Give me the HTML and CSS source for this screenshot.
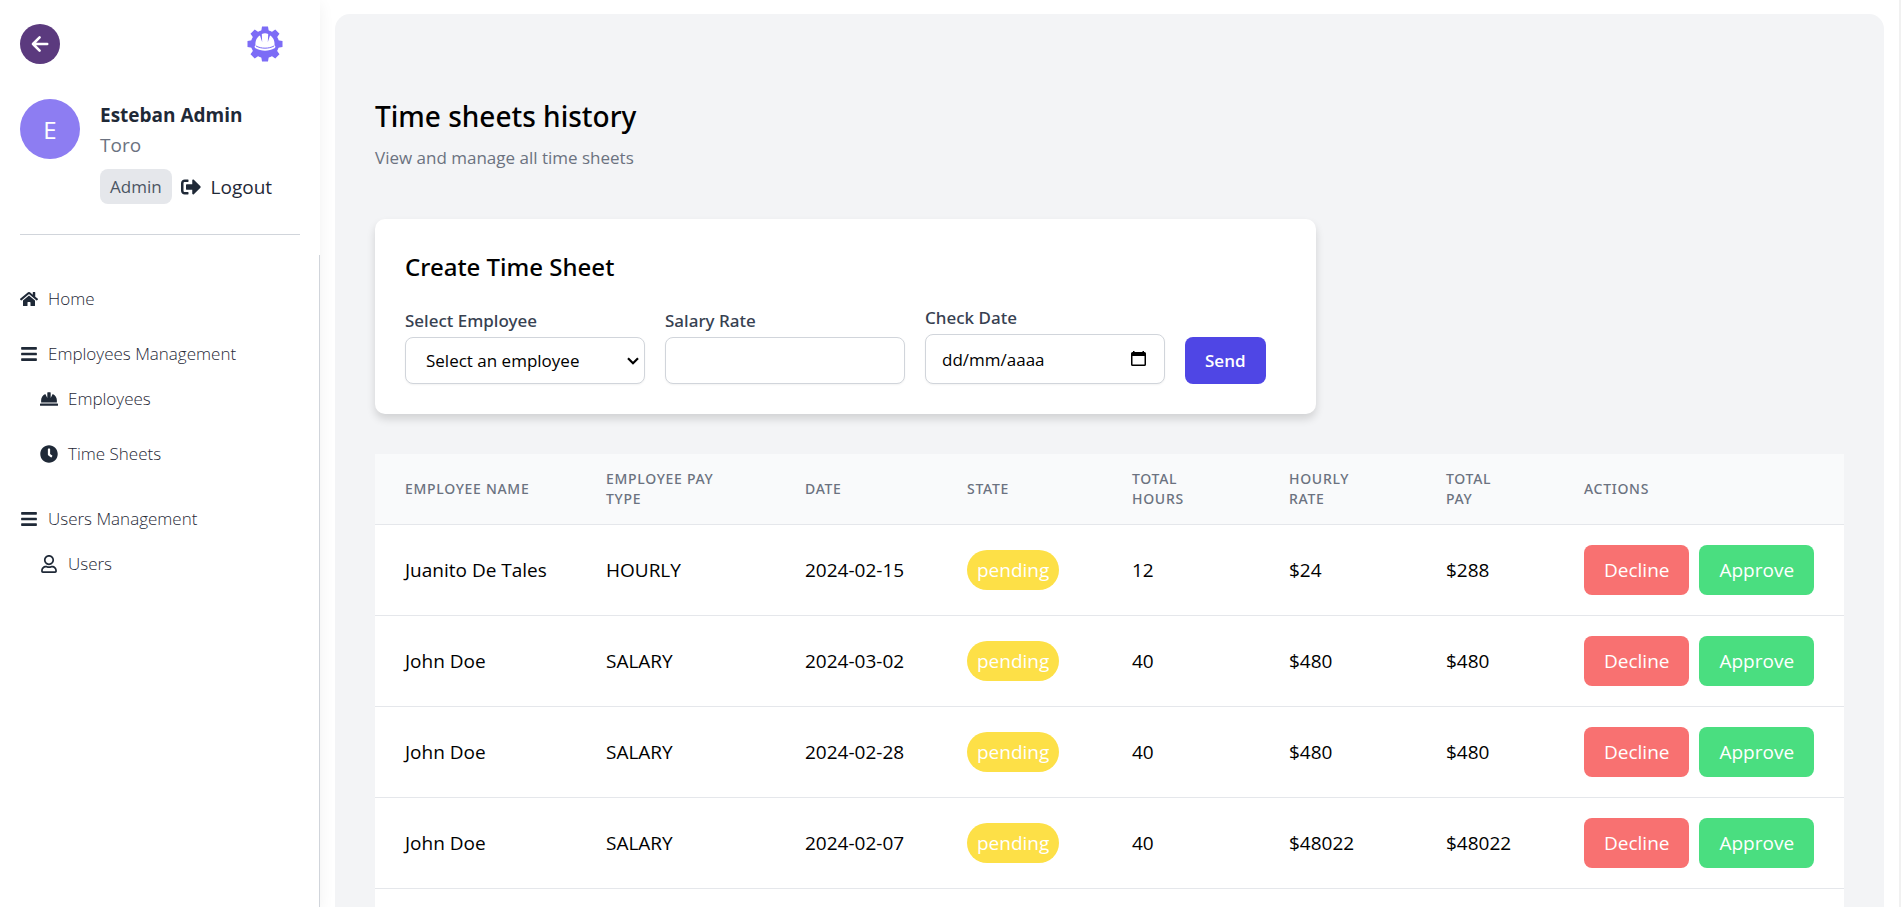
FILE: index.html
```html
<!DOCTYPE html>
<html lang="en">
<head>
<meta charset="utf-8">
<title>Time sheets history</title>
<link rel="stylesheet" href="styles.css">
</head>
<body>
<div class="app">
  <aside class="sidebar">
    <header class="sidebar-top">
      <button class="back" type="button" aria-label="Collapse sidebar">
        <svg viewBox="0 0 20 20" width="20" height="20" fill="none" stroke="currentColor" stroke-width="2.6" stroke-linecap="round" stroke-linejoin="round"><path d="M17.2 10H3M9.6 3.4 3 10l6.6 6.6"/></svg>
      </button>
      <svg class="logo" viewBox="0 0 36 36" width="36" height="36" aria-hidden="true">
        <g fill="#7c6cf6">
          <circle cx="18" cy="18" r="14"/>
          <path d="M15 0.500h6l1 6h-8zM15 35.500h6l1-6h-8zM0.500 15v6l6 1v-8zM35.500 15v6l-6 1v-8z"/>
          <path transform="rotate(45 18 18)" d="M15 0.500h6l1 6h-8zM15 35.500h6l1-6h-8zM0.500 15v6l6 1v-8zM35.500 15v6l-6 1v-8z"/>
        </g>
        <path fill="#fff" d="M8.500 19.500C8 14.500 10.200 11 13 9.600l2.200 6.600-.4-8.200c2-1 4.400-1 6.400 0l-.4 8.200L23 9.600c2.800 1.400 5 4.900 4.500 9.900 1.200.6 1.200 2 0 2.800-5.500 3.200-13.500 3.200-19 0-1.200-.8-1.200-2.200 0-2.800z"/>
        <path fill="none" stroke="#7c6cf6" stroke-width="1" d="M9 20c5 2.900 13 2.900 18 0"/>
      </svg>
    </header>
    <section class="profile">
      <div class="avatar">E</div>
      <div class="profile-info">
        <strong class="name">Esteban Admin</strong>
        <span class="company">Toro</span>
        <div class="profile-actions">
          <span class="role">Admin</span>
          <button class="logout" type="button">
            <svg viewBox="0 0 512 512" width="20" height="20" fill="currentColor"><path d="M497 273L329 441c-15 15-41 4.500-41-17v-96H152c-13.300 0-24-10.700-24-24v-96c0-13.300 10.700-24 24-24h136V88c0-21.400 25.900-32 41-17l168 168c9.300 9.400 9.300 24.600 0 34zM192 436v-40c0-6.600-5.400-12-12-12H96c-17.700 0-32-14.300-32-32V160c0-17.700 14.300-32 32-32h84c6.600 0 12-5.400 12-12V76c0-6.600-5.400-12-12-12H96c-53 0-96 43-96 96v192c0 53 43 96 96 96h84c6.600 0 12-5.400 12-12z"/></svg>
            Logout
          </button>
        </div>
      </div>
    </section>
    <hr class="rule">
    <nav class="nav">
      <a class="nav-link" href="#home"><svg viewBox="0 0 576 512" width="18" height="18" fill="currentColor"><path d="M280.370 148.260L96 300.110V464a16 16 0 0 0 16 16l112.060-.29a16 16 0 0 0 15.920-16V368a16 16 0 0 1 16-16h64a16 16 0 0 1 16 16v95.640a16 16 0 0 0 16 16.050L464 480a16 16 0 0 0 16-16V300L295.670 148.260a12.190 12.190 0 0 0-15.300 0zM571.600 251.470L488 182.560V44.050a12 12 0 0 0-12-12h-56a12 12 0 0 0-12 12v72.610L318.470 43a48 48 0 0 0-61 0L4.340 251.470a12 12 0 0 0-1.600 16.900l25.500 31A12 12 0 0 0 45.150 301l235.220-193.740a12.190 12.190 0 0 1 15.300 0L530.900 301a12 12 0 0 0 16.900-1.600l25.500-31a12 12 0 0 0-1.700-16.930z"/></svg>Home</a>
      <div class="nav-group">
        <div class="nav-link"><svg viewBox="0 0 448 512" width="18" height="18" fill="currentColor"><path d="M16 132h416c8.800 0 16-7.200 16-16V76c0-8.800-7.200-16-16-16H16C7.200 60 0 67.200 0 76v40c0 8.800 7.200 16 16 16zm0 160h416c8.800 0 16-7.200 16-16v-40c0-8.800-7.200-16-16-16H16c-8.800 0-16 7.200-16 16v40c0 8.800 7.200 16 16 16zm0 160h416c8.800 0 16-7.200 16-16v-40c0-8.800-7.200-16-16-16H16c-8.800 0-16 7.200-16 16v40c0 8.800 7.200 16 16 16z"/></svg>Employees Management</div>
        <div class="nav-sub">
          <a class="nav-link" href="#employees"><svg viewBox="0 0 512 512" width="18" height="18" fill="currentColor"><path d="M480 288c0-80.250-49.280-148.920-119.190-177.620L304 224V80a16 16 0 0 0-16-16h-64a16 16 0 0 0-16 16v144l-56.810-113.620C81.280 139.080 32 207.750 32 288v64h448zm16 96H16a16 16 0 0 0-16 16v32a16 16 0 0 0 16 16h480a16 16 0 0 0 16-16v-32a16 16 0 0 0-16-16z"/></svg>Employees</a>
          <a class="nav-link" href="#timesheets"><svg viewBox="0 0 512 512" width="18" height="18" fill="currentColor"><path d="M256,8C119,8,8,119,8,256S119,504,256,504,504,393,504,256,393,8,256,8Zm92.490,313h0l-20,25a16,16,0,0,1-22.490,2.500h0l-67-49.720a40,40,0,0,1-15-31.230V112a16,16,0,0,1,16-16h32a16,16,0,0,1,16,16V256l58,42.500A16,16,0,0,1,348.490,321Z"/></svg>Time Sheets</a>
        </div>
      </div>
      <div class="nav-group">
        <div class="nav-link"><svg viewBox="0 0 448 512" width="18" height="18" fill="currentColor"><path d="M16 132h416c8.800 0 16-7.200 16-16V76c0-8.800-7.200-16-16-16H16C7.200 60 0 67.200 0 76v40c0 8.800 7.200 16 16 16zm0 160h416c8.800 0 16-7.200 16-16v-40c0-8.800-7.200-16-16-16H16c-8.800 0-16 7.200-16 16v40c0 8.800 7.200 16 16 16zm0 160h416c8.800 0 16-7.200 16-16v-40c0-8.800-7.200-16-16-16H16c-8.800 0-16 7.200-16 16v40c0 8.800 7.200 16 16 16z"/></svg>Users Management</div>
        <div class="nav-sub">
          <a class="nav-link" href="#users"><svg viewBox="0 0 448 512" width="18" height="18" fill="currentColor"><path d="M313.600 304c-28.700 0-42.500 16-89.600 16-47.100 0-60.800-16-89.600-16C60.200 304 0 364.200 0 438.400V464c0 26.500 21.500 48 48 48h352c26.500 0 48-21.500 48-48v-25.600c0-74.200-60.200-134.400-134.400-134.400zM400 464H48v-25.600c0-47.600 38.800-86.400 86.400-86.400 14.600 0 38.300 16 89.600 16 51.700 0 74.900-16 89.600-16 47.600 0 86.400 38.800 86.400 86.400V464zM224 288c79.500 0 144-64.500 144-144S303.500 0 224 0 80 64.500 80 144s64.500 144 144 144zm0-240c52.900 0 96 43.100 96 96s-43.100 96-96 96-96-43.100-96-96 43.100-96 96-96z"/></svg>Users</a>
        </div>
      </div>
    </nav>
  </aside>
  <div class="content">
    <main class="panel">
      <h1 class="title">Time sheets history</h1>
      <p class="subtitle">View and manage all time sheets</p>
      <section class="card">
        <h2 class="card-title">Create Time Sheet</h2>
        <form class="form">
          <div class="field">
            <label for="employee">Select Employee</label>
            <div class="select-wrap">
              <select class="control" id="employee"><option>Select an employee</option></select>
              <svg class="chevron" viewBox="0 0 12 8" width="12" height="8" fill="none" stroke="#000" stroke-width="2.200"><path d="M1 1.200l5 5 5-5"/></svg>
            </div>
          </div>
          <div class="field">
            <label for="rate">Salary Rate</label>
            <input class="control" id="rate" type="text">
          </div>
          <div class="field">
            <label for="date">Check Date</label>
            <div class="select-wrap">
              <input class="control control-date" id="date" type="text" placeholder="dd/mm/aaaa">
              <button class="calendar" type="button" aria-label="Pick a date"><svg viewBox="0 0 15 17" width="15" height="17"><path fill="#000" fill-rule="evenodd" d="M2 1h1.500v1h8V1H13v1h.500A1.500 1.500 0 0 1 15 3.500v11a1.500 1.500 0 0 1-1.500 1.500h-12A1.500 1.500 0 0 1 0 14.500v-11A1.500 1.500 0 0 1 1.500 2H2zM1.500 6v8.500h12V6z"/></svg></button>
            </div>
          </div>
          <button class="send" type="submit">Send</button>
        </form>
      </section>
      <table class="sheet">
        <colgroup><col class="c-name"><col class="c-type"><col class="c-date"><col class="c-state"><col class="c-num"><col class="c-num"><col class="c-pay"><col class="c-actions"></colgroup>
        <thead>
          <tr><th>Employee Name</th><th>Employee Pay Type</th><th>Date</th><th>State</th><th>Total Hours</th><th>Hourly Rate</th><th>Total<br>Pay</th><th>Actions</th></tr>
        </thead>
        <tbody>
          <tr><td>Juanito De Tales</td><td>HOURLY</td><td>2024-02-15</td><td><span class="badge">pending</span></td><td>12</td><td>$24</td><td>$288</td><td><div class="actions"><button class="btn decline" type="button">Decline</button><button class="btn approve" type="button">Approve</button></div></td></tr>
          <tr><td>John Doe</td><td>SALARY</td><td>2024-03-02</td><td><span class="badge">pending</span></td><td>40</td><td>$480</td><td>$480</td><td><div class="actions"><button class="btn decline" type="button">Decline</button><button class="btn approve" type="button">Approve</button></div></td></tr>
          <tr><td>John Doe</td><td>SALARY</td><td>2024-02-28</td><td><span class="badge">pending</span></td><td>40</td><td>$480</td><td>$480</td><td><div class="actions"><button class="btn decline" type="button">Decline</button><button class="btn approve" type="button">Approve</button></div></td></tr>
          <tr><td>John Doe</td><td>SALARY</td><td>2024-02-07</td><td><span class="badge">pending</span></td><td>40</td><td>$48022</td><td>$48022</td><td><div class="actions"><button class="btn decline" type="button">Decline</button><button class="btn approve" type="button">Approve</button></div></td></tr>
          <tr class="blank"><td colspan="8"></td></tr>
        </tbody>
      </table>
    </main>
  </div>
</div>
</body>
</html>
```
FILE: styles.css
```css
* { box-sizing: border-box; margin: 0; }

body {
  font-family: "Open Sans", "Noto Sans", sans-serif;
  font-size: 19px;
  line-height: 30px;
  color: #000;
  background: #fff;
}

button, input, select { font: inherit; color: inherit; }
button { border: 0; padding: 0; background: none; cursor: pointer; }
svg { flex: none; display: block; }

.app {
  display: flex;
  height: 100vh;
  overflow: hidden;
  border-right: 2px solid #f1f1f1;
}

/* Sidebar */
.sidebar {
  flex: none;
  display: flex;
  flex-direction: column;
  width: 320px;
  color: #1f2937;
  box-shadow: 0 4px 15px rgba(0, 0, 0, 0.06);
}
.sidebar-top {
  display: flex;
  align-items: center;
  justify-content: space-between;
  padding: 24px 37px 0 20px;
}
.back {
  display: grid;
  place-items: center;
  width: 40px;
  height: 40px;
  border-radius: 50%;
  color: #fff;
  background: #5b3a7e;
}
.profile {
  display: flex;
  gap: 20px;
  padding: 35px 20px 30px;
}
.avatar {
  display: grid;
  place-items: center;
  width: 60px;
  height: 60px;
  padding-top: 2px;
  border-radius: 50%;
  font-size: 24px;
  color: #fff;
  background: #8d7df2;
}
.profile-info {
  display: flex;
  flex-direction: column;
  padding-top: 1px;
}
.name { font-weight: 700; }
.company { color: #6b7280; }
.profile-actions {
  display: flex;
  align-items: center;
  gap: 9px;
  margin-top: 9px;
}
.role {
  padding: 5px 10px;
  border-radius: 8px;
  font-size: 17px;
  line-height: 25px;
  color: #4b5563;
  background: #e5e7eb;
}
.logout { display: flex; align-items: center; gap: 10px; }
.rule {
  margin: 0 20px;
  border: 0;
  border-top: 1px solid #d1d5db;
}
.nav {
  flex: 1;
  display: flex;
  flex-direction: column;
  gap: 30px;
  margin-top: 20px;
  padding: 31px 20px 0;
  border-right: 1px solid #d1d5db;
  font-size: 17px;
  font-weight: 300;
  line-height: 25px;
}
.nav-link {
  display: flex;
  align-items: center;
  gap: 10px;
  color: #1f2937;
  text-decoration: none;
}
.nav-sub {
  display: flex;
  flex-direction: column;
  gap: 30px;
  padding: 20px 0 10px 20px;
}

/* Main panel */
.content { flex: 1; min-width: 0; padding: 14px 15px 0; }
.panel {
  min-height: 100%;
  padding: 80px 40px 0;
  border-radius: 15px 15px 0 0;
  background: #f3f4f6;
}
.title,
.card-title,
.sheet th { font-family: "Noto Sans", "Open Sans", sans-serif; font-weight: 500; }
.title { font-size: 28px; line-height: 44px; }
.subtitle {
  margin-top: 7px;
  font-size: 17px;
  line-height: 25px;
  color: #6b7280;
}
.card {
  width: fit-content;
  margin: 49px 0 40px;
  padding: 30px 50px 30px 30px;
  border-radius: 10px;
  background: #fff;
  box-shadow: 0 5px 8px rgba(0, 0, 0, 0.14);
}
.card-title { font-size: 24px; line-height: 36px; }
.form {
  display: flex;
  align-items: flex-end;
  gap: 20px;
  margin-top: 20px;
}
.field {
  width: 240px;
  font-size: 17px;
  line-height: 25px;
}
.field label {
  display: block;
  margin-bottom: 4px;
  font-family: "Noto Sans", "Open Sans", sans-serif;
  font-weight: 500;
  color: #374151;
}
.control {
  display: block;
  width: 100%;
  height: 47px;
  padding: 0 20px;
  border: 1px solid #d1d5db;
  border-radius: 8px;
  appearance: none;
  font-size: 17px;
  background: #fff;
  box-shadow: 0 1px 2px rgba(0, 0, 0, 0.05);
}
.control-date { height: 50px; padding: 0 16px; }
.control-date::placeholder { color: #000; opacity: 1; }
.select-wrap { position: relative; }
.chevron {
  position: absolute;
  top: 20px;
  right: 6px;
  pointer-events: none;
}
.calendar { position: absolute; top: 16px; right: 19px; }
.send {
  height: 47px;
  padding: 0 20px;
  border-radius: 8px;
  font-size: 17px;
  font-weight: 600;
  color: #fff;
  background: #4f46e5;
}

/* Table */
.sheet {
  width: 100%;
  table-layout: fixed;
  border-collapse: separate;
  border-spacing: 0;
  background: #fff;
}
.c-name { width: 201px; }
.c-type { width: 199px; }
.c-date { width: 162px; }
.c-state { width: 165px; }
.c-num { width: 157px; }
.c-pay { width: 138px; }
.c-actions { width: 290px; }
.sheet th {
  padding: 15px 30px;
  border-bottom: 1px solid #e5e7eb;
  font-size: 14px;
  line-height: 20px;
  letter-spacing: 0.05em;
  text-align: left;
  text-transform: uppercase;
  color: #6b7280;
  background: #f9fafb;
}
.sheet td {
  padding: 20px 30px;
  border-bottom: 1px solid #e5e7eb;
  white-space: nowrap;
}
.badge {
  display: inline-block;
  padding: 5px 10px;
  border-radius: 20px;
  color: #fff;
  background: #fde047;
}
.actions { display: flex; gap: 10px; }
.btn {
  padding: 10px 20px;
  border-radius: 8px;
  color: #fff;
}
.decline { background: #f87171; }
.approve { background: #4ade80; }
.blank td { height: 91px; }
```
